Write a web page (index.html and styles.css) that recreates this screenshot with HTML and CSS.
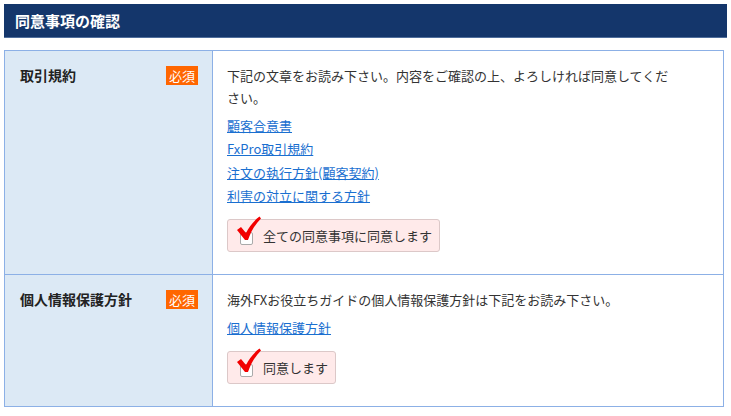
FILE: index.html
```html
<!DOCTYPE html>
<html lang="ja">
<head>
    <meta charset="UTF-8">
    <meta name="viewport" content="width=device-width, initial-scale=1.0">
    <title>同意事項の確認</title>
    <link rel="stylesheet" href="styles.css">
</head>
<body>
    <h2 class="section-title">同意事項の確認</h2>

    <table class="agree-table">
        <tr>
            <th>
                <div class="label-row">
                    <span>取引規約</span>
                    <span class="required">必須</span>
                </div>
            </th>
            <td>
                <p class="lead">下記の文章をお読み下さい。内容をご確認の上、よろしければ同意してください。</p>
                <ul class="doc-links">
                    <li><a href="#">顧客合意書</a></li>
                    <li><a href="#">FxPro取引規約</a></li>
                    <li><a href="#">注文の執行方針(顧客契約)</a></li>
                    <li><a href="#">利害の対立に関する方針</a></li>
                </ul>
                <label class="agree-box">
                    <span class="check-square"></span>
                    <svg class="check-mark" width="26" height="26" viewBox="0 0 26 26"><path d="M1 14 L5 11 L10 17 C13 11 17.5 5 23.5 0.5 L25 2.5 C19 8.5 15 15.5 12 24 L9 24 Z" fill="#f20000"/></svg>
                    <span>全ての同意事項に同意します</span>
                </label>
            </td>
        </tr>
        <tr>
            <th>
                <div class="label-row">
                    <span>個人情報保護方針</span>
                    <span class="required">必須</span>
                </div>
            </th>
            <td>
                <p class="lead">海外FXお役立ちガイドの個人情報保護方針は下記をお読み下さい。</p>
                <ul class="doc-links">
                    <li><a href="#">個人情報保護方針</a></li>
                </ul>
                <label class="agree-box">
                    <span class="check-square"></span>
                    <svg class="check-mark" width="26" height="26" viewBox="0 0 26 26"><path d="M1 14 L5 11 L10 17 C13 11 17.5 5 23.5 0.5 L25 2.5 C19 8.5 15 15.5 12 24 L9 24 Z" fill="#f20000"/></svg>
                    <span>同意します</span>
                </label>
            </td>
        </tr>
    </table>
</body>
</html>
```

FILE: styles.css
```css
body {
    margin: 4px;
    font-family: "Noto Sans CJK JP", "Noto Sans", sans-serif;
    font-size: 13px;
    color: #333;
}
.section-title {
    margin: 0 0 12px;
    height: 34px;
    line-height: 33px;
    padding: 0 11px;
    background-color: #14366b;
    border-bottom: 1px solid #4f6e9c;
    color: #fff;
    font-size: 15px;
    font-weight: bold;
    box-sizing: border-box;
}
.agree-table {
    width: 720px;
    border-collapse: collapse;
    border: 1px solid #8cb0e6;
}
.agree-table th,
.agree-table td {
    border: 1px solid #8cb0e6;
    vertical-align: top;
    text-align: left;
}
.agree-table th {
    width: 208px;
    padding: 14px 14px 0 15px;
    background-color: #dce9f5;
    box-sizing: border-box;
}
.agree-table td {
    padding: 14px 15px 22px 14px;
    background-color: #fff;
}
.label-row {
    display: flex;
    justify-content: space-between;
    align-items: center;
    font-size: 14px;
    font-weight: bold;
    color: #222;
    line-height: 20px;
}
.required {
    background-color: #ff6600;
    color: #fff;
    font-weight: normal;
    font-size: 13px;
    padding: 0 3px;
    line-height: 19px;
}
.lead {
    margin: 0 0 5px;
    max-width: 452px;
    line-height: 22px;
}
.doc-links {
    list-style: none;
    margin: 0 0 12px;
    padding: 0;
}
.doc-links li {
    line-height: 23.3px;
}
.doc-links a {
    color: #1a6fd0;
    text-decoration: underline;
}
.agree-box {
    position: relative;
    display: inline-flex;
    align-items: center;
    gap: 10px;
    height: 33px;
    padding: 0 7px 0 12px;
    background-color: #ffeaea;
    border: 1px solid #dcc8c8;
    border-radius: 3px;
    box-sizing: border-box;
    cursor: pointer;
}
.check-square {
    width: 11px;
    height: 11px;
    margin-top: 5px;
    background-color: #fff;
    border: 1px solid #aaa;
    border-radius: 2px;
}
.check-mark {
    position: absolute;
    left: 8px;
    top: -4px;
}
```
